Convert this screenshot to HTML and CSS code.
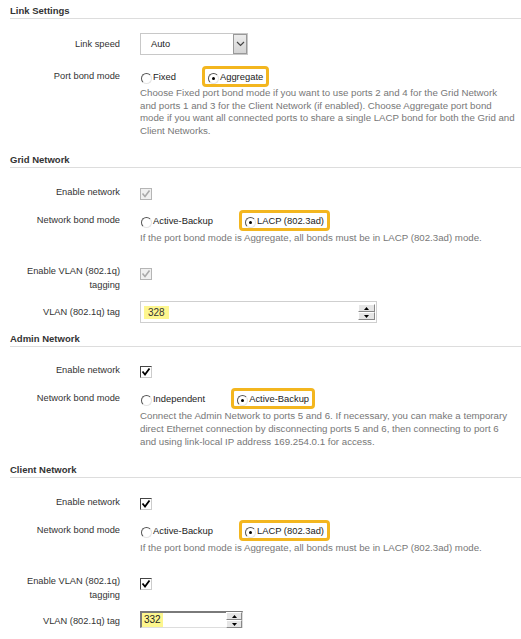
FILE: index.html
```html
<!DOCTYPE html>
<html>
<head>
<meta charset="utf-8">
<link rel="stylesheet" href="styles.css">
</head>
<body>
<div class="page">

  <section class="sec sec-link">
    <h2 class="sec-title">Link Settings</h2>
    <div class="row row-select">
      <div class="lbl lbl-22">Link speed</div>
      <div class="ctl">
        <div class="select">
          <span class="select-val">Auto</span>
          <span class="select-btn"><svg width="9" height="6" viewBox="0 0 9 6"><path d="M1 1 L4.5 4.5 L8 1" fill="none" stroke="#444" stroke-width="1.2"/></svg></span>
        </div>
      </div>
    </div>
    <div class="row row-bond">
      <div class="lbl lbl-21">Port bond mode</div>
      <div class="ctl">
        <div class="radios">
          <span class="opt"><span class="radio"></span>Fixed</span>
          <span class="opt opt-hl"><span class="radio on"></span>Aggregate</span>
        </div>
        <p class="help help-4">Choose Fixed port bond mode if you want to use ports 2 and 4 for the Grid Network<br>and ports 1 and 3 for the Client Network (if enabled). Choose Aggregate port bond<br>mode if you want all connected ports to share a single LACP bond for both the Grid and<br>Client Networks.</p>
      </div>
    </div>
  </section>

  <section class="sec sec-grid">
    <h2 class="sec-title">Grid Network</h2>
    <div class="row row-enable">
      <div class="lbl">Enable network</div>
      <div class="ctl"><span class="cb cb-dis"><svg width="10" height="10" viewBox="0 0 10 10"><path d="M1.5 4.5 L4 7.5 L8.5 1.5" fill="none" stroke="#aaa" stroke-width="1.6"/></svg></span></div>
    </div>
    <div class="row row-bond2">
      <div class="lbl lbl-21">Network bond mode</div>
      <div class="ctl">
        <div class="radios">
          <span class="opt"><span class="radio"></span>Active-Backup</span>
          <span class="opt opt-hl"><span class="radio on"></span>LACP (802.3ad)</span>
        </div>
        <p class="help">If the port bond mode is Aggregate, all bonds must be in LACP (802.3ad) mode.</p>
      </div>
    </div>
    <div class="row row-vlan">
      <div class="lbl lbl-2">Enable VLAN (802.1q)<br>tagging</div>
      <div class="ctl"><span class="cb cb-dis cb-vlan"><svg width="10" height="10" viewBox="0 0 10 10"><path d="M1.5 4.5 L4 7.5 L8.5 1.5" fill="none" stroke="#aaa" stroke-width="1.6"/></svg></span></div>
    </div>
    <div class="row row-tag">
      <div class="lbl lbl-22">VLAN (802.1q) tag</div>
      <div class="ctl">
        <div class="num num-wide">
          <span class="num-val">328</span>
          <span class="spin">
            <span class="spin-btn"><svg width="5" height="3" viewBox="0 0 5 3"><path d="M0 3 L2.5 0 L5 3Z" fill="#000"/></svg></span>
            <span class="spin-btn"><svg width="5" height="3" viewBox="0 0 5 3"><path d="M0 0 L2.5 3 L5 0Z" fill="#000"/></svg></span>
          </span>
        </div>
      </div>
    </div>
  </section>

  <section class="sec sec-admin">
    <h2 class="sec-title">Admin Network</h2>
    <div class="row row-enable">
      <div class="lbl">Enable network</div>
      <div class="ctl"><span class="cb cb-on"><svg width="10" height="10" viewBox="0 0 10 10"><path d="M1.5 4.5 L4 7.5 L8.5 1.5" fill="none" stroke="#000" stroke-width="1.8"/></svg></span></div>
    </div>
    <div class="row row-bond2">
      <div class="lbl lbl-21">Network bond mode</div>
      <div class="ctl">
        <div class="radios">
          <span class="opt"><span class="radio"></span>Independent</span>
          <span class="opt opt-hl"><span class="radio on"></span>Active-Backup</span>
        </div>
        <p class="help help-3">Connect the Admin Network to ports 5 and 6. If necessary, you can make a temporary<br>direct Ethernet connection by disconnecting ports 5 and 6, then connecting to port 6<br>and using link-local IP address 169.254.0.1 for access.</p>
      </div>
    </div>
  </section>

  <section class="sec sec-client">
    <h2 class="sec-title">Client Network</h2>
    <div class="row row-enable">
      <div class="lbl">Enable network</div>
      <div class="ctl"><span class="cb cb-on"><svg width="10" height="10" viewBox="0 0 10 10"><path d="M1.5 4.5 L4 7.5 L8.5 1.5" fill="none" stroke="#000" stroke-width="1.8"/></svg></span></div>
    </div>
    <div class="row row-bond2">
      <div class="lbl lbl-21">Network bond mode</div>
      <div class="ctl">
        <div class="radios">
          <span class="opt"><span class="radio"></span>Active-Backup</span>
          <span class="opt opt-hl"><span class="radio on"></span>LACP (802.3ad)</span>
        </div>
        <p class="help">If the port bond mode is Aggregate, all bonds must be in LACP (802.3ad) mode.</p>
      </div>
    </div>
    <div class="row row-vlan">
      <div class="lbl lbl-2">Enable VLAN (802.1q)<br>tagging</div>
      <div class="ctl"><span class="cb cb-on cb-vlan"><svg width="10" height="10" viewBox="0 0 10 10"><path d="M1.5 4.5 L4 7.5 L8.5 1.5" fill="none" stroke="#000" stroke-width="1.8"/></svg></span></div>
    </div>
    <div class="row row-tag">
      <div class="lbl lbl-22">VLAN (802.1q) tag</div>
      <div class="ctl">
        <div class="num num-small">
          <span class="num-val">332</span>
          <span class="spin">
            <span class="spin-btn"><svg width="5" height="3" viewBox="0 0 5 3"><path d="M0 3 L2.5 0 L5 3Z" fill="#000"/></svg></span>
            <span class="spin-btn"><svg width="5" height="3" viewBox="0 0 5 3"><path d="M0 0 L2.5 3 L5 0Z" fill="#000"/></svg></span>
          </span>
        </div>
      </div>
    </div>
  </section>

</div>
</body>
</html>
```

FILE: styles.css
```css
* { box-sizing: border-box; }

html, body {
  margin: 0;
  padding: 0;
  background: #fff;
}

body {
  font-family: "Liberation Sans", Arial, sans-serif;
  font-size: 9.3px;
  color: #333;
}

.page {
  width: 521px;
  overflow: hidden;
}

.sec-title {
  margin: 0 0 0 10px;
  font-size: 9.5px;
  font-weight: bold;
  line-height: 14px;
  color: #333;
  border-bottom: 1px solid #ddd;
}

.sec-link .sec-title { margin-top: 4px; }
.sec-grid .sec-title { margin-top: 16px; }
.sec-admin .sec-title { margin-top: 9px; }
.sec-client .sec-title { margin-top: 15px; }

.row {
  display: grid;
  grid-template-columns: 120px 1fr;
  column-gap: 20px;
  align-items: start;
}

.ctl {
  display: flex;
  flex-direction: column;
  align-items: flex-start;
}

.lbl {
  text-align: right;
  line-height: 14px;
  color: #333;
}

.lbl-22 { line-height: 22px; }
.lbl-21 { line-height: 21px; }
.lbl-2 { line-height: 14px; }

.row-select { margin-top: 14px; }
.row-bond { margin-top: 11px; }
.row-enable { margin-top: 17px; }
.sec-admin .row-enable { margin-top: 16px; }
.row-bond2 { margin-top: 10px; }
.row-vlan { margin-top: 20px; }
.row-tag { margin-top: 9px; }
.sec-client .row-tag { margin-top: 8px; }

.row-enable .lbl { height: 14px; }

/* select */
.select {
  width: 108px;
  height: 22px;
  border: 1px solid #c8c8c8;
  display: flex;
  align-items: center;
  justify-content: space-between;
  background: #fff;
}

.select-val {
  padding-left: 10px;
  color: #222;
}

.select-btn {
  width: 14px;
  height: 20px;
  border: 1px solid #999;
  background: linear-gradient(#ececec, #d4d4d4);
  display: flex;
  align-items: center;
  justify-content: center;
}

/* radios */
.radios {
  display: flex;
  align-items: center;
  height: 21px;
}

.opt {
  display: inline-flex;
  align-items: center;
  color: #222;
  line-height: 15px;
  font-size: 9.4px;
}

.opt:first-child { margin-left: 1px; margin-right: 26px; }

.opt-hl {
  border: 3px solid #f3b61f;
  border-radius: 4px;
  padding: 0 3px 0 3px;
  height: 21px;
}

.radio {
  width: 11px;
  height: 11px;
  border-radius: 50%;
  border: 1px solid;
  border-color: #555 #e4e4e4 #e4e4e4 #555;
  background: #fff;
  margin-right: 1px;
  margin-top: 3px;
  position: relative;
  flex: none;
}

.radio.on::after {
  content: "";
  position: absolute;
  left: 3px;
  top: 3px;
  width: 3px;
  height: 3px;
  border-radius: 50%;
  background: #000;
}

/* help text */
.help {
  margin: 0;
  color: #777;
  line-height: 13px;
  font-size: 9.7px;
  white-space: nowrap;
}

.help-4 { line-height: 12.5px; }
.help-3 { line-height: 13px; }

/* checkboxes */
.cb {
  display: flex;
  align-items: center;
  justify-content: center;
  width: 12px;
  height: 12px;
  margin-top: 3px;
}

.cb-dis {
  border: 1px solid #b5b5b5;
  background: #f0f0f0;
}

.cb-on {
  border: 1px solid;
  border-color: #444 #ccc #ccc #444;
  background: #fff;
}

.cb-vlan { margin-top: 4px; }

/* number inputs */
.num {
  display: flex;
  align-items: center;
  justify-content: space-between;
  background: #fff;
}

.num-wide {
  width: 237px;
  height: 22px;
  border: 1px solid #cfcfcf;
  padding: 0 1px 0 3px;
}

.num-small {
  width: 103px;
  height: 17px;
  border-style: solid;
  border-width: 2px 1px 1px 2px;
  border-color: #7a7a7a #ddd #ddd #7a7a7a;
  margin-top: 1px;
}

.num-val {
  background: #fdf68e;
  color: #333;
  font-size: 10px;
  line-height: 13px;
  padding: 0 4px;
}

.num-small .num-val {
  line-height: 14px;
  padding: 0 2px;
  color: #222;
}

.spin {
  display: flex;
  flex-direction: column;
  width: 17px;
}

.num-small .spin { width: 16px; }

.spin-btn {
  height: 8px;
  border: 1px solid;
  border-color: #fff #888 #888 #fff;
  background: #e6e6e6;
  display: flex;
  align-items: center;
  justify-content: center;
}
```
